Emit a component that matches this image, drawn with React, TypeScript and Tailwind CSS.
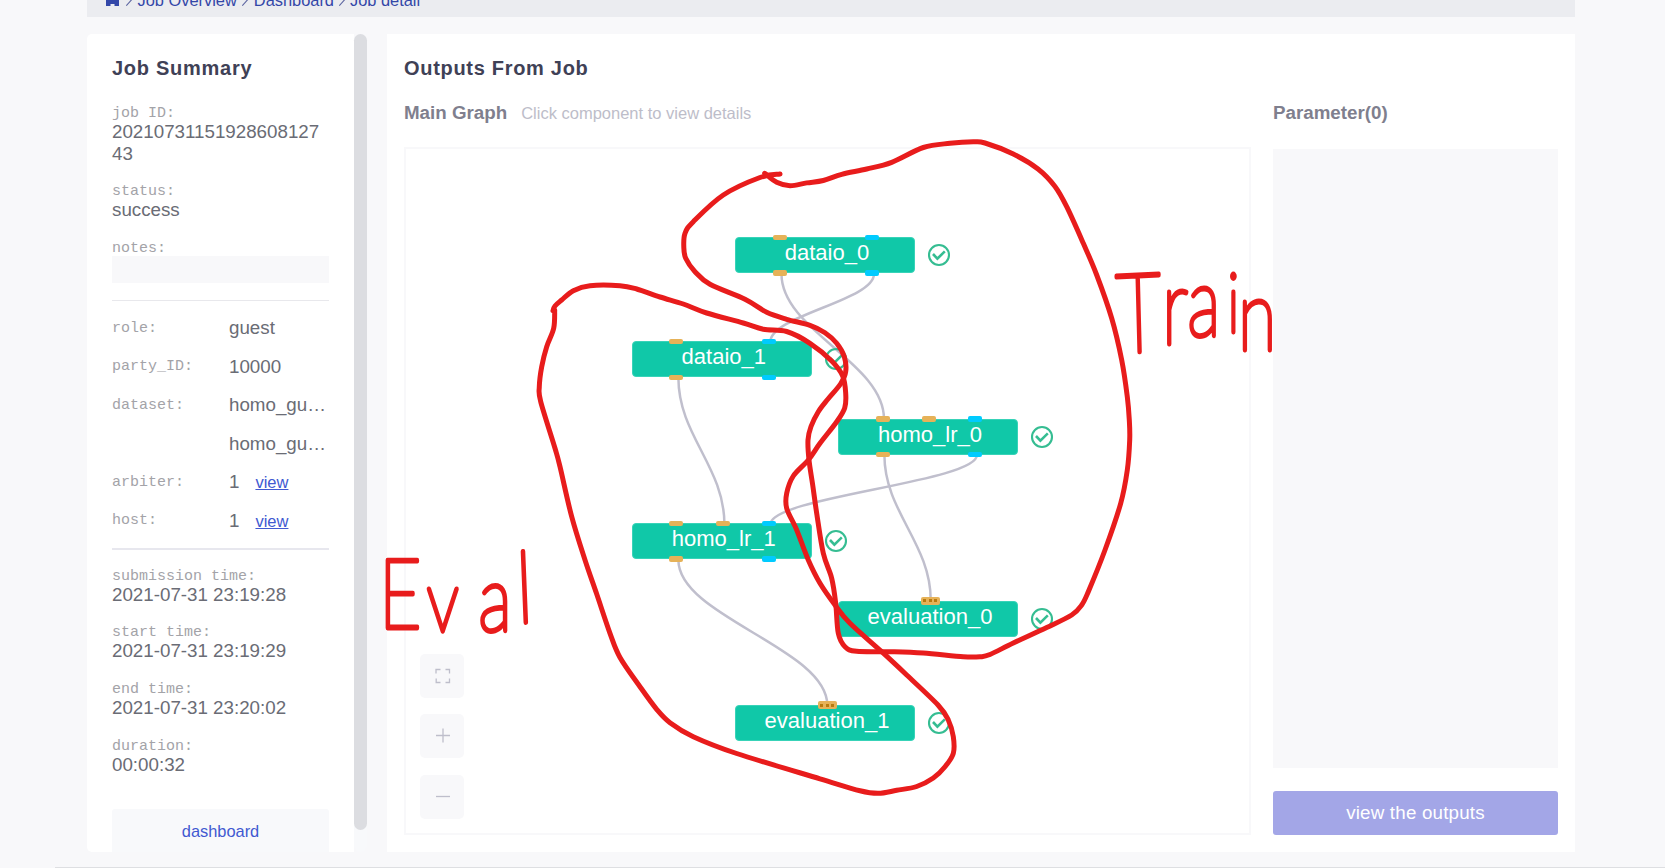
import React from 'react'

type Point = [number, number]

type GraphNode = {
  name: string
  x: number
  y: number
  top: [number, string][]
  bottom: [number, string][]
  multi?: boolean
}

const CANVAS_X = 406
const CANVAS_Y = 149

const ORANGE = 'bg-[#e6b258]'
const BLUE = 'bg-[#00cbff]'

const nodes: GraphNode[] = [
  { name: 'dataio_0', x: 734.8, y: 237, top: [[38, ORANGE], [130.6, BLUE]], bottom: [[38, ORANGE], [130.6, BLUE]] },
  { name: 'dataio_1', x: 631.6, y: 341.4, top: [[38, ORANGE], [130.6, BLUE]], bottom: [[38, ORANGE], [130.6, BLUE]] },
  { name: 'homo_lr_0', x: 837.8, y: 418.8, top: [[38, ORANGE], [84.4, ORANGE], [130.6, BLUE]], bottom: [[38, ORANGE], [130.6, BLUE]] },
  { name: 'homo_lr_1', x: 631.6, y: 523.3, top: [[38, ORANGE], [84.4, ORANGE], [130.6, BLUE]], bottom: [[38, ORANGE], [130.6, BLUE]] },
  { name: 'evaluation_0', x: 837.8, y: 600.5, top: [], bottom: [], multi: true },
  { name: 'evaluation_1', x: 734.8, y: 705, top: [], bottom: [], multi: true },
]

const edges: [number, number, number, number][] = [
  [781.5, 274, 884, 419],
  [874, 274, 770.3, 342],
  [678.4, 378, 724.4, 524],
  [884.4, 455, 930.7, 600],
  [977, 455, 770.6, 524],
  [678.4, 560, 827.3, 705],
]

const trainLoop: Point[] = [
  [764.7, 173.3], [776.7, 182.3], [790, 185.7], [806.7, 182.9], [823.3, 180.5], [841.7, 174.3], [866.7, 169],
  [891.7, 162.3], [923.3, 147.5], [950, 143.3], [973.3, 141.8], [985, 143], [1013.3, 154], [1038, 169],
  [1055, 186.5], [1066.7, 206.7], [1083.3, 243.3], [1096.7, 275], [1111.7, 318.3], [1121.7, 360], [1127.3, 396.7],
  [1129.3, 420], [1129.7, 440], [1127.3, 470], [1120.7, 503.3], [1105, 550], [1088.3, 591.7], [1081.7, 605],
  [1071.7, 615], [1046.7, 627.5], [1013.3, 643], [990, 654.5], [980, 656.8], [963.3, 656.8], [923.3, 653],
  [893.3, 651.7], [856.7, 651.3], [845, 646.7], [838.3, 633.3], [835.7, 603.3], [831.7, 578.3], [823.3, 553.3],
  [816.7, 513.3], [812.7, 485], [809, 460], [808, 440], [811, 426.5], [818.3, 411.7], [828, 399], [840.5, 384],
  [845.7, 371.7], [844.3, 356.7], [836.7, 343.3], [825, 332.7], [810, 325.3], [786.7, 319.3], [766.7, 312.3],
  [745, 299.3], [710, 284.3], [695, 271.7], [685.7, 258.3], [683.8, 246.7], [685, 233.3], [693.3, 221.7],
  [723.3, 195], [760, 177.5], [780, 174],
]

const evalLoop: Point[] = [
  [553, 310.7], [555, 306], [561.7, 300], [573.3, 290.7], [590, 285.7], [620, 285.7], [636.7, 289], [660, 297],
  [683.3, 304], [706.7, 313], [743.3, 323], [763.3, 329.3], [786.7, 331.5], [810, 343.3], [831.7, 361],
  [842.7, 376], [845.7, 393.3], [844.7, 408], [836.7, 421.7], [820, 443.3], [808.3, 460], [793.3, 476],
  [786.7, 493.3], [786.7, 508.3], [796.7, 530], [808.3, 560], [820, 583.3], [835, 605], [850, 623.3],
  [881.7, 651.7], [906.7, 675], [938, 705], [948.3, 720], [953.3, 736.7], [953.3, 753.3], [945, 766.7],
  [933.3, 778], [916.7, 786.5], [896.7, 790.3], [878.3, 793.3], [860, 790.7], [820, 778.8], [736.7, 753.5],
  [693.3, 736.7], [670, 722.7], [656.7, 709.3], [640, 686.7], [620, 657.5], [610, 633.3], [596.7, 594],
  [585, 560], [571.7, 516.7], [560, 466.7], [555, 448.3], [540.7, 401.7], [539.3, 386.7], [541.7, 366.7],
  [546.7, 346.7], [553.7, 328.3], [554.7, 310],
]

function smoothPath(pts: Point[]) {
  let d = `M${pts[0][0]} ${pts[0][1]}`
  for (let i = 0; i < pts.length - 1; i++) {
    const p0 = pts[Math.max(i - 1, 0)]
    const p1 = pts[i]
    const p2 = pts[i + 1]
    const p3 = pts[Math.min(i + 2, pts.length - 1)]
    d += ` C${p1[0] + (p2[0] - p0[0]) / 6} ${p1[1] + (p2[1] - p0[1]) / 6} ${p2[0] - (p3[0] - p1[0]) / 6} ${p2[1] - (p3[1] - p1[1]) / 6} ${p2[0]} ${p2[1]}`
  }
  return d
}

function Label({ children }: { children: React.ReactNode }) {
  return (
    <div className="h-[15px] whitespace-nowrap font-['Liberation_Mono',monospace] text-[15px] leading-[15px] text-[#a3a3a8]">
      {children}
    </div>
  )
}

function Field({ label, children }: { label: string; children: React.ReactNode }) {
  return (
    <div>
      <Label>{label}</Label>
      <div className="break-all text-[18.75px] leading-[22px] text-[#6a6c75]">{children}</div>
    </div>
  )
}

function Row({ label, children }: { label?: string; children: React.ReactNode }) {
  return (
    <div className="flex h-[38.5px] items-center">
      <div className="w-[117px] shrink-0">{label && <Label>{label}</Label>}</div>
      <div className="flex min-w-0 items-baseline gap-[16px] text-[18.75px] leading-[22px] text-[#6a6c75]">{children}</div>
    </div>
  )
}

function ViewLink() {
  return <a className="text-[16.5px] text-[#4159d1] underline">view</a>
}

function NodeBox({ node }: { node: GraphNode }) {
  return (
    <div
      className="absolute h-9 w-[180.4px] rounded-[4px] border border-[#38d3b8] bg-[#10c8a8]"
      style={{ left: node.x - CANVAS_X, top: node.y - CANVAS_Y }}
    >
      <div className="pl-1 text-center text-[22px] leading-[30px] text-white">{node.name}</div>
      {node.top.map(([x, color]) => (
        <i key={x} className={`absolute -top-[3.5px] h-[5.4px] w-[14px] rounded-[2px] ${color}`} style={{ left: x - 1.2 }} />
      ))}
      {node.bottom.map(([x, color]) => (
        <i key={x} className={`absolute -bottom-[3.5px] h-[5.4px] w-[14px] rounded-[2px] ${color}`} style={{ left: x - 1.2 }} />
      ))}
      {node.multi && (
        <div className="absolute -top-[5px] left-[82px] flex h-2 w-[19px] items-center justify-center gap-[2.5px] rounded-[2px] bg-[#e6b258]">
          <i className="size-[3px] bg-[#b87a10]" />
          <i className="size-[3px] bg-[#b87a10]" />
          <i className="size-[3px] bg-[#b87a10]" />
        </div>
      )}
      <svg className="absolute left-[191.6px] top-[5px]" width="24" height="24" viewBox="-12 -12 24 24" fill="none" stroke="#35bd92">
        <circle r="10" strokeWidth="2.1" />
        <path d="M-6 -1L-1.6 3.6L5.8 -3.6" strokeWidth="2.6" />
      </svg>
    </div>
  )
}

function ControlButton({ d }: { d: string }) {
  return (
    <button className="flex size-11 items-center justify-center rounded-[5px] bg-[#f8f8fa]">
      <svg className="ml-px" width="16" height="16" viewBox="0 0 16 16" fill="none" stroke="#bebecb" strokeWidth="1.3">
        <path d={d} />
      </svg>
    </button>
  )
}

function Annotations() {
  return (
    <svg
      className="pointer-events-none absolute left-0 top-0"
      width="1665"
      height="868"
      viewBox="0 0 1665 868"
      fill="none"
      stroke="#e81c1c"
      strokeWidth="5"
      strokeLinecap="round"
      strokeLinejoin="round"
    >
      <path d={smoothPath(trainLoop)} />
      <path d={smoothPath(evalLoop)} />
      <g className="font-['Lato',sans-serif] font-thin" fill="#e81c1c" strokeWidth="4.8">
        <text transform="translate(1117 0) scale(.72 1)">
          <tspan x="0" y="353" fontSize="110" rotate="-2">T</tspan>
          <tspan x="62" y="344" fontSize="106">r</tspan>
          <tspan x="98" y="336" fontSize="96">a</tspan>
          <tspan x="153" y="332" fontSize="82">i</tspan>
          <tspan x="168" y="350" fontSize="98">n</tspan>
        </text>
        <text transform="translate(382 0) scale(.76 1)">
          <tspan x="-4" y="628" fontSize="96">E</tspan>
          <tspan x="59" y="631" fontSize="86">v</tspan>
          <tspan x="127" y="631" fontSize="92">a</tspan>
          <tspan x="179" y="623" fontSize="99" rotate="-3">l</tspan>
        </text>
      </g>
    </svg>
  )
}

export default function App() {
  return (
    <div className="relative flex h-[868px] w-[1665px] flex-col overflow-hidden bg-[#f8f8fa] font-['Liberation_Sans',Arial,sans-serif]">
      <nav className="ml-[87px] flex h-[17px] w-[1488px] shrink-0 items-end overflow-hidden bg-[#ebecf0] pb-[7px] pl-[18px] text-[16.4px] leading-[20px] text-[#3347a8]">
        <svg className="mb-[4px] mr-[6px] shrink-0" width="15" height="14" viewBox="0 0 15 14" fill="#3347a8">
          <path d="M7.5 0L15 7H14V14H9.5V12H5.5V14H1V7H0Z" />
        </svg>
        <Slash />
        <span className="ml-[4.5px] whitespace-nowrap">Job Overview</span>
        <Slash className="ml-[5px]" />
        <span className="ml-[5px]">Dashboard</span>
        <Slash className="ml-[5px]" />
        <span className="ml-[4px] whitespace-nowrap">Job detail</span>
      </nav>

      <main className="ml-[87px] mt-[17px] flex h-[818px] w-[1488px] shrink-0">
        <aside className="flex w-[267px] shrink-0 flex-col rounded-l-[5px] bg-white px-[25px] pt-[22px]">
          <h2 className="text-[20px] font-bold leading-[24px] tracking-[0.73px] text-[#3f4156]">Job Summary</h2>
          <div className="mt-[26px] flex flex-col gap-[19.4px]">
            <Field label="job ID:">2021073115192860812743</Field>
            <Field label="status:">success</Field>
            <div>
              <Label>notes:</Label>
              <div className="h-[27px] bg-[#f8f8fa]" />
            </div>
          </div>
          <div className="mt-[17.2px] h-px shrink-0 bg-[#e8e8ec]" />
          <div className="mt-[7.8px]">
            <Row label="role:">guest</Row>
            <Row label="party_ID:">10000</Row>
            <Row label="dataset:">homo_gu…</Row>
            <Row>homo_gu…</Row>
            <Row label="arbiter:">
              1<ViewLink />
            </Row>
            <Row label="host:">
              1<ViewLink />
            </Row>
          </div>
          <div className="mt-[7.8px] h-[2px] shrink-0 bg-[#e7e7ee]" />
          <div className="mt-[19px] flex flex-col gap-[19.7px]">
            <Field label="submission time:">2021-07-31 23:19:28</Field>
            <Field label="start time:">2021-07-31 23:19:29</Field>
            <Field label="end time:">2021-07-31 23:20:02</Field>
            <Field label="duration:">00:00:32</Field>
          </div>
          <button className="mt-auto h-[43px] shrink-0 rounded-t-[3px] bg-[#f8f9fb] pt-[2px] text-[16.4px] text-[#4159d1]">dashboard</button>
        </aside>
        <div className="w-[13px] shrink-0 rounded-full bg-[#f8f9fb]">
          <div className="h-[796px] rounded-full bg-[#dcdde1]" />
        </div>

        <section className="ml-5 flex grow flex-col bg-white pb-[17px] pl-[17px] pr-[17px] pt-[22px]">
          <h2 className="text-[20px] font-bold leading-[24px] tracking-[0.7px] text-[#3f4156]">Outputs From Job</h2>
          <div className="mt-[22px] flex h-[22px] items-baseline leading-[22px]">
            <h3 className="text-[18.75px] font-bold text-[#7f7f8e]">Main Graph</h3>
            <span className="ml-[14px] text-[16.5px] text-[#bdbdc9]">Click component to view details</span>
            <h3 className="ml-auto w-[285px] text-[18.75px] font-bold text-[#7f7f8e]">Parameter(0)</h3>
          </div>
          <div className="mt-[23px] flex grow justify-between">
            <div className="relative w-[847px] border-2 border-[#f8f8fa]">
              <svg className="absolute left-0 top-0" width="843" height="684" viewBox="406 149 843 684" fill="none" stroke="#c0bfcd" strokeWidth="2.5">
                {edges.map(([x1, y1, x2, y2]) => {
                  const c = (y2 - y1) * 0.39
                  return <path key={`${x1}-${x2}`} d={`M${x1} ${y1}C${x1} ${y1 + c} ${x2} ${y2 - c} ${x2} ${y2}`} />
                })}
              </svg>
              {nodes.map((n) => (
                <NodeBox key={n.name} node={n} />
              ))}
              <div className="absolute bottom-[14px] left-[14px] flex flex-col gap-4">
                <ControlButton d="M1 5.5V1.5H5.5M10.5 1.5H14.5V5.5M14.5 10.5V14.5H10.5M5.5 14.5H1.2V10.5" />
                <ControlButton d="M1 7.5H15M8 .5V14.5" />
                <div className="mt-px">
                  <ControlButton d="M1 7.5H15" />
                </div>
              </div>
            </div>
            <div className="flex w-[285px] flex-col pt-[2px]">
              <div className="grow bg-[#f8f8fa]" />
              <button className="mt-[23px] h-11 rounded-[3px] bg-[#a3a6e7] text-[18.75px] tracking-[0.2px] text-white">view the outputs</button>
            </div>
          </div>
        </section>
      </main>
      <div className="ml-[55px] mt-[15px] h-px shrink-0 bg-[#dedfe2]" />
      <Annotations />
    </div>
  )
}

function Slash({ className = '' }: { className?: string }) {
  return (
    <svg className={`mb-[3px] shrink-0 ${className}`} width="7" height="10" viewBox="0 0 7 10" fill="none" stroke="#5b64a0" strokeWidth="1.1">
      <path d="M.3 8.7L6.7 1.5" />
    </svg>
  )
}
